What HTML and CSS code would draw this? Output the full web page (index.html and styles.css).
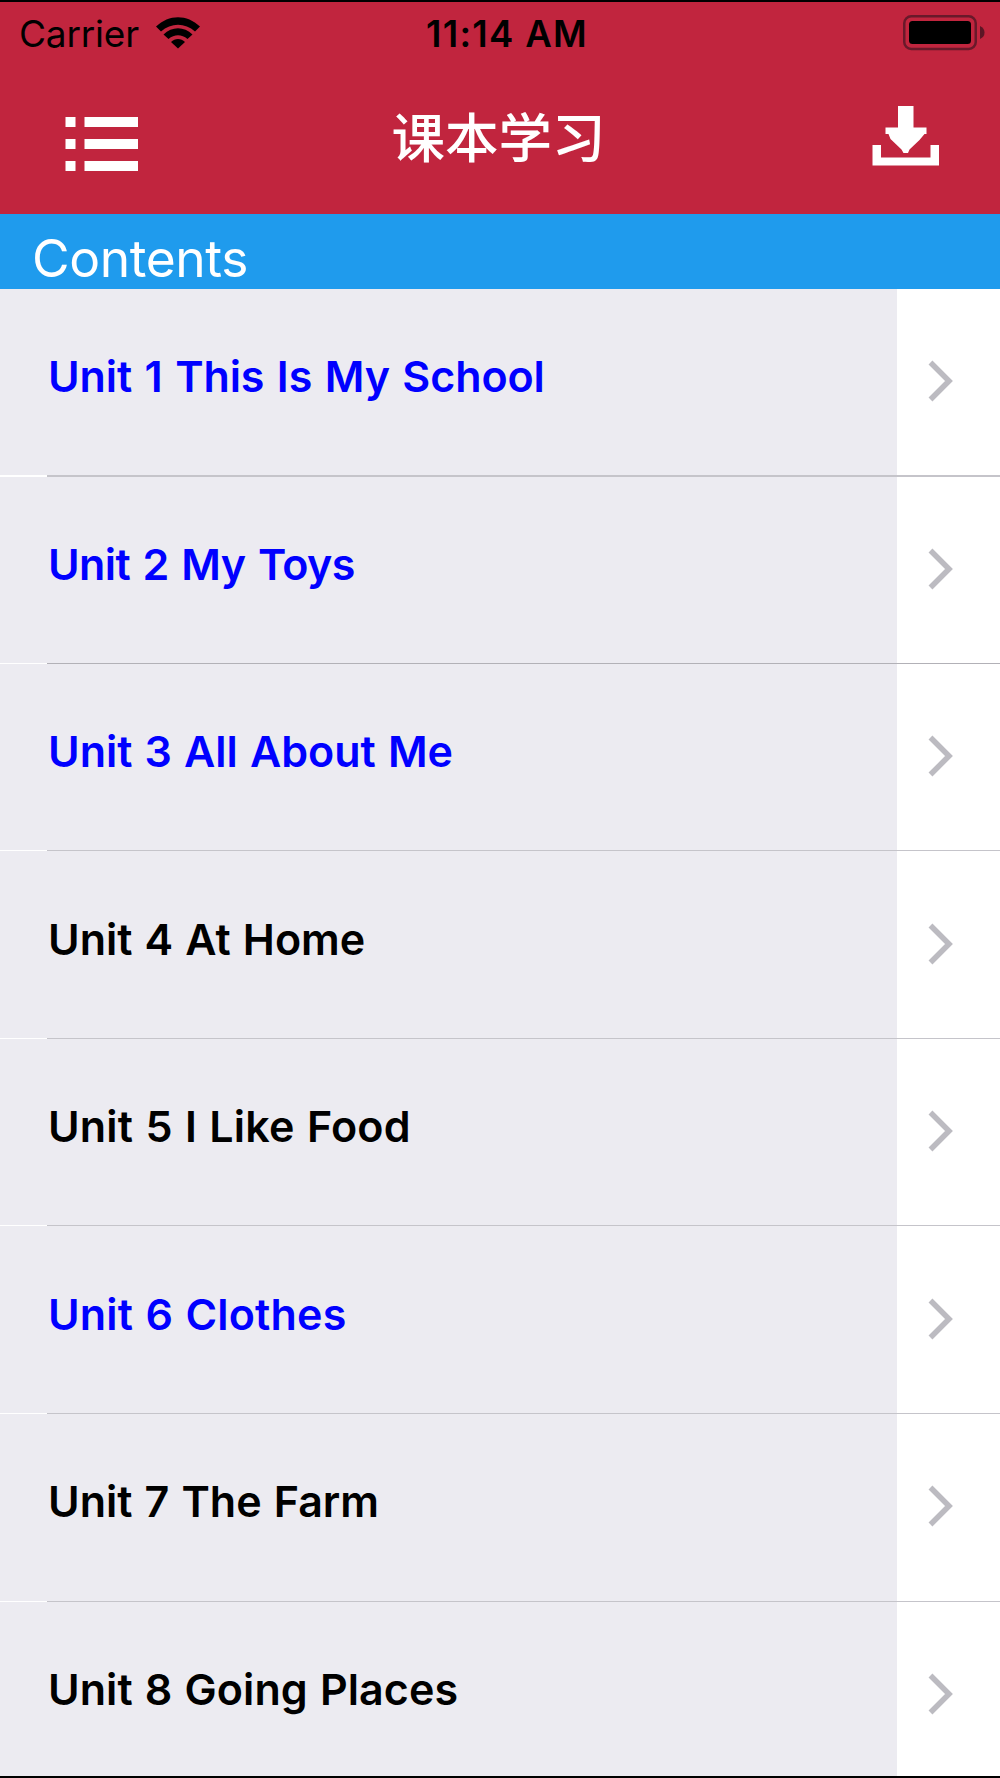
FILE: index.html
```
<!DOCTYPE html>
<html lang="zh-CN">
    <head>
        <meta charset="UTF-8" />
        <meta name="viewport" content="width=device-width, initial-scale=1.0" />
        <title>课本学习</title>
        <link rel="stylesheet" href="styles.css">
    </head>
    <body>
        <div class="screen">
            <header class="header">
                <div class="status">
                    <div class="carrier">
                        <span class="carrier-name">Carrier</span>
                        <svg class="wifi" width="44" height="32" viewBox="0 0 44 32">
                            <path d="M0 9.500C13-3 31-3 44 9.500L39 14.500C29 5.500 15 5.500 5 14.500Z" />
                            <path d="M7.500 17.500C16 9 28 9 36.500 17.500L31.500 22C25.500 17 18.500 17 12.500 22Z" />
                            <path d="M15 25C19 21 25 21 29 25L22 31.500Z" />
                        </svg>
                    </div>
                    <span class="time">11:14 AM</span>
                    <svg class="battery" width="82" height="38" viewBox="0 0 82 38">
                        <rect class="battery-case" x="1.250" y="3.250" width="71.500" height="32.750" rx="7" />
                        <rect x="6" y="8" width="62" height="23" rx="3.500" />
                        <path class="battery-cap" d="M77 13Q81.500 15 81.500 19.500T77 26Z" />
                    </svg>
                </div>
                <div class="nav">
                    <svg class="menu" width="73" height="55" viewBox="0 0 73 55">
                        <path d="M0.500 0h10v10h-10zM19.500 0H73v10H19.500zM0.500 22h10v10h-10zM19.500 22H73v10H19.500zM0.500 44h10v10h-10zM19.500 44H73v10H19.500z" />
                    </svg>
                    <h1 class="title">课本学习</h1>
                    <svg class="download" width="67" height="60" viewBox="0 0 67 60">
                        <path d="M26 0H41.500V21.500H54.500V28H52.500L47.500 34L37.500 43.500L36 47H31.500L29.500 43.500L18.500 33L16.500 28H13.500V21.500H26Z" />
                        <path d="M0.500 39H9V51.500H58.500V39H67V59.500H0.500Z" />
                    </svg>
                </div>
            </header>
            <div class="section">Contents</div>
            <ul class="list">
                <li class="row done"><span class="name unit1">Unit 1 This Is My School</span></li>
                <li class="row done"><span class="name unit2">Unit 2 My Toys</span></li>
                <li class="row done"><span class="name">Unit 3 All About Me</span></li>
                <li class="row"><span class="name">Unit 4 At Home</span></li>
                <li class="row"><span class="name unit5">Unit 5 I Like Food</span></li>
                <li class="row done"><span class="name unit6">Unit 6 Clothes</span></li>
                <li class="row"><span class="name">Unit 7 The Farm</span></li>
                <li class="row"><span class="name unit8">Unit 8 Going Places</span></li>
            </ul>
        </div>
        <script>
            // every row ends with the same arrow
            let rows = document.getElementsByClassName("row")
            Array.from(rows).forEach(row => {
                row.insertAdjacentHTML("beforeend",
                    '<span class="arrow"><svg width="26" height="42" viewBox="0 0 26 42">' +
                    '<path d="M2.500 2.500L21 21L2.500 39.500" /></svg></span>')
            })
        </script>
    </body>
</html>
```
FILE: styles.css
```
* {
    margin: 0;
    padding: 0;
    box-sizing: border-box;
}
body {
    background: #ffffff;
    font-family: Inter, "Noto Sans CJK SC", sans-serif;
}
.screen {
    width: 1000px;
    height: 1778px;
    overflow: hidden;
    border-top: 2px solid #000000;
    border-bottom: 2px solid #000000;
}
svg {
    display: block;
    flex: none;
}
.header {
    height: 212px;
    background: #c1253e;
}
/* status bar */
.status {
    display: grid;
    grid-template-columns: 1fr auto 1fr;
    height: 66px;
    padding: 0 15px 0 19px;
    line-height: 65px;
    font-size: 37px;
    white-space: nowrap;
}
.carrier {
    display: flex;
    align-items: flex-start;
}
.carrier-name {
    width: 137px;
    line-height: 64px;
    letter-spacing: -0.2px;
}
.wifi {
    margin-top: 15px;
}
.time {
    padding-left: 10px;
    font-size: 36.5px;
    font-weight: 600;
    letter-spacing: 1.3px;
}
.battery {
    justify-self: end;
    margin-top: 11px;
}
.battery-case {
    fill: none;
    stroke: #69192a;
    stroke-width: 2.5;
}
.battery-cap {
    fill: #5d1625;
}
/* title bar */
.nav {
    display: flex;
    justify-content: space-between;
    padding: 0 61px 0 65px;
}
.nav svg {
    fill: #ffffff;
}
.menu {
    margin-top: 49px;
}
.title {
    padding: 27px 13px 0 0;
    line-height: 80px;
    font-size: 53.5px;
    font-weight: 500;
    font-family: "Noto Sans CJK SC", sans-serif;
    color: #ffffff;
}
.download {
    margin-top: 38px;
}
.section {
    height: 75px;
    padding-left: 32px;
    line-height: 89px;
    font-size: 51.5px;
    font-weight: 400;
    letter-spacing: -0.4px;
    color: #ffffff;
    background: #1f9bed;
}
/* unit list */
.list {
    list-style: none;
}
.row {
    display: flex;
    height: 187.5px;
    background:
        linear-gradient(90deg, #ffffff 47px, #c5c4ca 47px) 0 100% / 100% 1px no-repeat,
        linear-gradient(90deg, #ecebf1 897px, #ffffff 897px);
    color: #000000;
}
.row:nth-child(1) {
    background-size: 100% 2px, auto;
}
.row:nth-child(2) {
    background-image:
        linear-gradient(90deg, #ffffff 47px, #b2b1b7 47px),
        linear-gradient(90deg, #ecebf1 897px, #ffffff 897px);
}
.row:nth-child(3),
.row:nth-child(5) {
    background-position: 0 calc(100% - 1px), 0 0;
}
.done {
    color: #0000ff;
}
.name {
    width: 897px;
    padding-left: 48px;
    line-height: 174px;
    font-size: 43px;
    font-weight: 600;
    word-spacing: 1.3px;
    white-space: nowrap;
}
.unit1 {
    letter-spacing: -0.1px;
    word-spacing: 1.8px;
}
.unit2 {
    letter-spacing: -0.6px;
    word-spacing: 2.3px;
}
.unit5,
.unit6 {
    letter-spacing: 0.18px;
}
.unit8 {
    letter-spacing: 0.06px;
}
.arrow {
    padding: 71px 0 0 31px;
}
.arrow path {
    fill: none;
    stroke: #bcbbc1;
    stroke-width: 5.5;
}
```
